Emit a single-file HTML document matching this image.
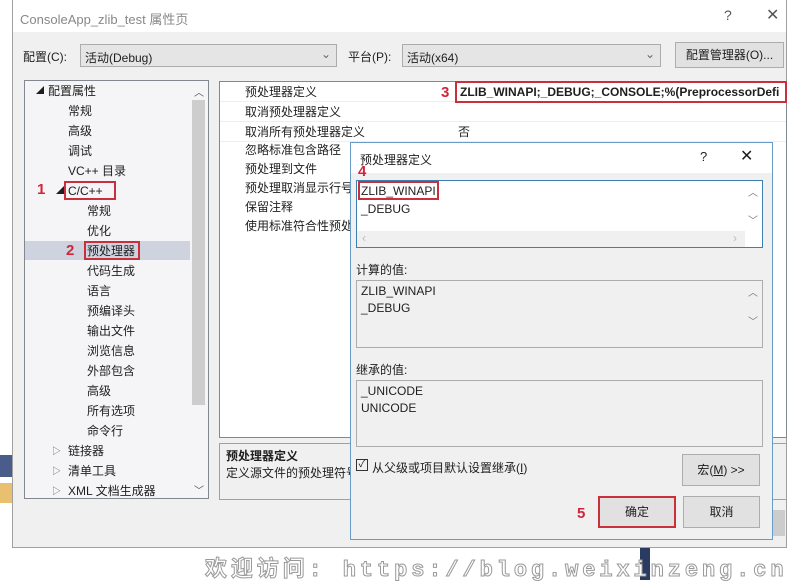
<!DOCTYPE html>
<html><head><meta charset="utf-8"><style>
*{margin:0;padding:0;box-sizing:border-box}
body{width:796px;height:580px;overflow:hidden;background:#fff;position:relative;font-family:"Liberation Sans","Microsoft YaHei","Noto Sans CJK SC",sans-serif;font-size:12px;color:#1e1e1e}
.a{position:absolute;white-space:nowrap}
.r{color:#d0253a;font-weight:bold;font-size:15px}
.rb{position:absolute;border:2px solid #c8303c}
.t{position:absolute;line-height:20px;white-space:nowrap}
.btn{position:absolute;background:#e1e1e1;border:1px solid #adadad;text-align:center}
</style></head><body>
<!-- left strip -->
<div class="a" style="left:0;top:455px;width:12px;height:22px;background:#4a5d8a"></div>
<div class="a" style="left:0;top:483px;width:12px;height:20px;background:#e8c070"></div>
<!-- main window -->
<div class="a" style="left:12px;top:0;width:775px;height:548px;background:#f0f0f0;border:1px solid #a0a0a0"></div>
<div class="a" style="left:13px;top:0;width:773px;height:32px;background:#fff"></div>
<div class="a" style="left:20px;top:9px;font-size:13px;color:#888">ConsoleApp_zlib_test 属性页</div>
<div class="a" style="left:724px;top:7px;font-size:14px;color:#555">?</div>
<div class="a" style="left:766px;top:5px;font-size:16px;color:#555">✕</div>
<div class="a" style="left:23px;top:48px">配置(C):</div>
<div class="a" style="left:80px;top:44px;width:257px;height:23px;background:#e5e5e5;border:1px solid #acacac;padding:4px 4px">活动(Debug)<span style="position:absolute;right:5px;top:2px;color:#666">⌄</span></div>
<div class="a" style="left:348px;top:48px">平台(P):</div>
<div class="a" style="left:402px;top:44px;width:259px;height:23px;background:#e5e5e5;border:1px solid #acacac;padding:4px 4px">活动(x64)<span style="position:absolute;right:5px;top:2px;color:#666">⌄</span></div>
<div class="btn" style="left:675px;top:42px;width:109px;height:26px;line-height:24px">配置管理器(O)...</div>
<!-- tree -->
<div class="a" style="left:24px;top:80px;width:185px;height:419px;background:#f5f5f7;border:1px solid #828790"></div>
<div class="a" style="left:192px;top:100px;width:13px;height:305px;background:#cdcdcd"></div>
<div class="a" style="left:194px;top:84px;font-size:10px;color:#555">︿</div>
<div class="a" style="left:194px;top:482px;font-size:10px;color:#555">﹀</div>
<div class="a" style="left:25px;top:241px;width:165px;height:19px;background:#cfd3df"></div>
<div class="t" style="left:36px;top:81px;font-size:8px">◢</div>
<div class="t" style="left:48px;top:81px">配置属性</div>
<div class="t" style="left:68px;top:101px">常规</div>
<div class="t" style="left:68px;top:121px">高级</div>
<div class="t" style="left:68px;top:141px">调试</div>
<div class="t" style="left:68px;top:161px">VC++ 目录</div>
<div class="t" style="left:56px;top:181px;font-size:8px">◢</div>
<div class="t" style="left:68px;top:181px">C/C++</div>
<div class="t" style="left:87px;top:201px">常规</div>
<div class="t" style="left:87px;top:221px">优化</div>
<div class="t" style="left:87px;top:241px">预处理器</div>
<div class="t" style="left:87px;top:261px">代码生成</div>
<div class="t" style="left:87px;top:281px">语言</div>
<div class="t" style="left:87px;top:301px">预编译头</div>
<div class="t" style="left:87px;top:321px">输出文件</div>
<div class="t" style="left:87px;top:341px">浏览信息</div>
<div class="t" style="left:87px;top:361px">外部包含</div>
<div class="t" style="left:87px;top:381px">高级</div>
<div class="t" style="left:87px;top:401px">所有选项</div>
<div class="t" style="left:87px;top:421px">命令行</div>
<div class="t" style="left:52px;top:441px;font-size:9px;color:#666">▷</div><div class="t" style="left:68px;top:441px">链接器</div>
<div class="t" style="left:52px;top:461px;font-size:9px;color:#666">▷</div><div class="t" style="left:68px;top:461px">清单工具</div>
<div class="t" style="left:52px;top:481px;font-size:9px;color:#666">▷</div><div class="t" style="left:68px;top:481px">XML 文档生成器</div>
<div class="a r" style="left:37px;top:181px">1</div>
<div class="rb" style="left:64px;top:181px;width:52px;height:19px"></div>
<div class="a r" style="left:66px;top:242px">2</div>
<div class="rb" style="left:84px;top:241px;width:56px;height:19px"></div>
<!-- grid -->
<div class="a" style="left:219px;top:81px;width:568px;height:357px;background:#fff;border:1px solid #828790"></div>
<div class="t" style="left:245px;top:82px">预处理器定义</div>
<div class="t" style="left:245px;top:102px">取消预处理器定义</div>
<div class="t" style="left:245px;top:122px">取消所有预处理器定义</div>
<div class="t" style="left:458px;top:122px">否</div>
<div class="t" style="left:245px;top:140px">忽略标准包含路径</div>
<div class="t" style="left:245px;top:159px">预处理到文件</div>
<div class="t" style="left:245px;top:178px">预处理取消显示行号</div>
<div class="t" style="left:245px;top:197px">保留注释</div>
<div class="t" style="left:245px;top:216px">使用标准符合性预处理器</div>
<div class="a" style="left:220px;top:101px;width:566px;height:1px;background:#eee"></div>
<div class="a" style="left:220px;top:121px;width:566px;height:1px;background:#eee"></div>
<div class="a" style="left:220px;top:141px;width:566px;height:1px;background:#eee"></div>
<div class="a r" style="left:441px;top:84px">3</div>
<div class="rb" style="left:455px;top:81px;width:332px;height:22px"></div>
<div class="t" style="left:460px;top:82px;font-weight:bold">ZLIB_WINAPI;_DEBUG;_CONSOLE;%(PreprocessorDefi</div>
<div class="a" style="left:219px;top:443px;width:568px;height:57px;background:#f0f0f0;border:1px solid #a0a0a0"></div>
<div class="a" style="left:226px;top:447px;font-weight:bold">预处理器定义</div>
<div class="a" style="left:226px;top:464px">定义源文件的预处理符号</div>
<div class="a" style="left:765px;top:510px;width:20px;height:26px;background:#ccc"></div>
<!-- dialog -->
<div class="a" style="left:350px;top:142px;width:423px;height:398px;background:#f0f0f0;border:1px solid #6a9bc8"></div>
<div class="a" style="left:351px;top:143px;width:421px;height:30px;background:#fff"></div>
<div class="a" style="left:360px;top:151px">预处理器定义</div>
<div class="a" style="left:700px;top:149px;font-size:13px">?</div>
<div class="a" style="left:740px;top:146px;font-size:16px">✕</div>
<div class="a r" style="left:358px;top:163px">4</div>
<div class="a" style="left:356px;top:180px;width:407px;height:68px;background:#fff;border:1px solid #3c7fb1"></div>
<div class="a" style="left:357px;top:231px;width:388px;height:16px;background:#f0f0f0"></div>
<div class="a" style="left:362px;top:231px;color:#bbb">‹</div><div class="a" style="left:733px;top:231px;color:#bbb">›</div>
<div class="a" style="left:748px;top:184px;color:#777;font-size:10px">︿</div><div class="a" style="left:748px;top:212px;color:#777;font-size:10px">﹀</div>
<div class="rb" style="left:358px;top:181px;width:81px;height:19px"></div>
<div class="a" style="left:361px;top:184px">ZLIB_WINAPI</div>
<div class="a" style="left:361px;top:202px">_DEBUG</div>
<div class="a" style="left:356px;top:261px">计算的值:</div>
<div class="a" style="left:356px;top:280px;width:407px;height:68px;border:1px solid #adadad"></div>
<div class="a" style="left:361px;top:284px">ZLIB_WINAPI</div>
<div class="a" style="left:361px;top:301px">_DEBUG</div>
<div class="a" style="left:748px;top:284px;color:#777;font-size:10px">︿</div><div class="a" style="left:748px;top:313px;color:#777;font-size:10px">﹀</div>
<div class="a" style="left:356px;top:361px">继承的值:</div>
<div class="a" style="left:356px;top:380px;width:407px;height:67px;border:1px solid #adadad"></div>
<div class="a" style="left:361px;top:384px">_UNICODE</div>
<div class="a" style="left:361px;top:401px">UNICODE</div>
<div class="a" style="left:356px;top:459px;width:12px;height:12px;border:1px solid #333;font-size:10px;line-height:10px;text-align:center">✓</div>
<div class="a" style="left:372px;top:459px">从父级或项目默认设置继承(<u>I</u>)</div>
<div class="btn" style="left:682px;top:454px;width:78px;height:32px;line-height:30px">宏(<u>M</u>) &gt;&gt;</div>
<div class="btn" style="left:598px;top:496px;width:78px;height:32px;line-height:28px;border:2px solid #c8303c">确定</div>
<div class="btn" style="left:683px;top:496px;width:77px;height:32px;line-height:30px">取消</div>
<div class="a r" style="left:577px;top:505px">5</div>
<!-- watermark -->
<div class="a" style="left:640px;top:548px;width:10px;height:32px;background:#2a3a60"></div>
<div class="a" style="left:205px;top:551px;font-size:22px;color:#fff;-webkit-text-stroke:1px #999;font-weight:bold;letter-spacing:3.9px;font-family:'Liberation Mono','Noto Sans CJK SC',monospace">欢迎访问: https://blog.weixinzeng.cn</div>
</body></html>
